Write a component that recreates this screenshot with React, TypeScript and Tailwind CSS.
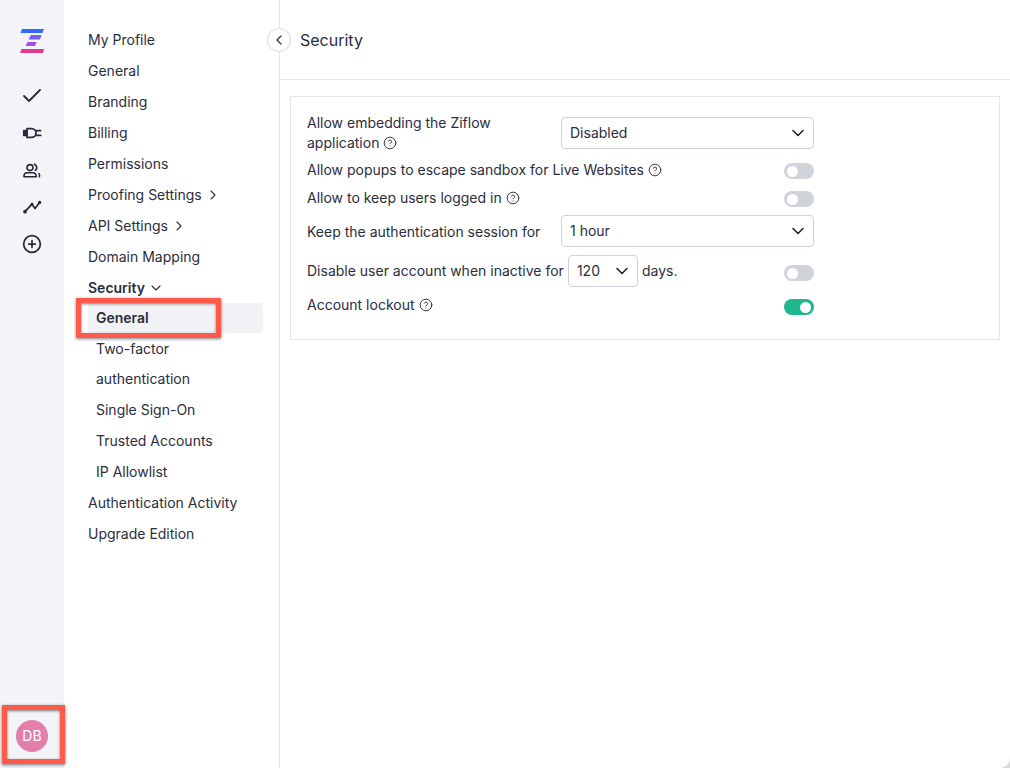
import { Check, ChevronDown, ChevronLeft, ChevronRight, CircleHelp, CirclePlus } from "lucide-react";

const navTop = [
  { label: "My Profile" },
  { label: "General" },
  { label: "Branding" },
  { label: "Billing" },
  { label: "Permissions" },
  { label: "Proofing Settings", more: true },
  { label: "API Settings", more: true },
  { label: "Domain Mapping" },
];

function Logo() {
  return (
    <svg width="24" height="24" viewBox="0 0 24 24">
      <polygon points="2,0 24,0 22.5,4 0.5,4" fill="#2f6bff" />
      <polygon points="11,6 21.5,6 20,10.5 8.5,10.5" fill="#7c5cf5" />
      <polygon points="7.5,13 16.5,13 15,17 5.5,17" fill="#a24fe0" />
      <polygon points="1.5,20 24,20 23,24 0,24" fill="#e6398d" />
    </svg>
  );
}

function PlugIcon() {
  return (
    <svg width="20" height="20" viewBox="0 0 20 20" fill="none" stroke="#27293a" strokeWidth="1.7" strokeLinecap="round" strokeLinejoin="round">
      <path d="M1.8 7.5H5v5H1.8z" fill="#27293a" />
      <path d="M5 5.6h4.6a4.4 4.4 0 0 1 0 8.8H5z" />
      <path d="M14.2 7.6h4.5M14.2 12.4h4.5" />
    </svg>
  );
}

function UsersIcon() {
  return (
    <svg width="20" height="20" viewBox="0 0 20 20" fill="none" stroke="#27293a" strokeWidth="1.6" strokeLinecap="round" strokeLinejoin="round">
      <circle cx="8" cy="7.6" r="3" />
      <path d="M2 16.8v-1a3 3 0 0 1 3-3h6a3.2 3.2 0 0 1 3.2 3.2v.8z" />
      <path d="M12.4 4.2a3.9 3.9 0 0 1 2.4 3.4 3.9 3.9 0 0 1-1.5 2.8M17 13.6a4 4 0 0 1 .4 3.2" />
    </svg>
  );
}

function TrendIcon() {
  return (
    <svg width="20" height="20" viewBox="0 0 20 20" fill="none" stroke="#27293a" strokeWidth="1.7" strokeLinecap="round" strokeLinejoin="round">
      <path d="M3 14.7 10 7.2l3 4.3 4.6-6" />
      <circle cx="3" cy="14.7" r="1" fill="#27293a" />
      <circle cx="10" cy="7.2" r="0.6" fill="#27293a" />
      <circle cx="17.6" cy="5.5" r="0.8" fill="#27293a" />
    </svg>
  );
}

function Help() {
  return <CircleHelp size={14} strokeWidth={1.6} className="ml-[4px] inline-block shrink-0 align-[-2px] text-[#2b2d3d]" />;
}

function Toggle({ on }: { on?: boolean }) {
  return (
    <div className={`flex h-4 w-[30px] items-center rounded-full px-[3px] ${on ? "justify-end bg-[#22b68d]" : "justify-start bg-[#d1d3da]"}`}>
      <div className="h-[11px] w-[11px] rounded-full bg-white" />
    </div>
  );
}

function Select({ value, className }: { value: string; className: string }) {
  return (
    <div className={`flex h-8 items-center justify-between rounded border border-[#d0d1dc] bg-white pl-2 pr-[5px] ${className}`}>
      <span>{value}</span>
      <ChevronDown size={20} strokeWidth={1.9} className="text-[#1f2130]" />
    </div>
  );
}

export default function App() {
  return (
    <div className="relative h-[768px] w-[1010px] overflow-hidden bg-[#d9d9d9] text-sm text-[#2b2d3d] [font-family:Inter,'Liberation_Sans',sans-serif]">
      <div className="flex h-full overflow-hidden rounded-br-[10px] bg-white">
        <aside className="flex w-16 shrink-0 flex-col items-center bg-[#f3f4f8]">
          <div className="mt-[29px]">
            <Logo />
          </div>
          <div className="mt-[33px] flex flex-col items-center gap-[17px]">
            <div className="flex h-5 w-5 items-center justify-center">
              <Check size={24} strokeWidth={1.8} className="shrink-0 text-[#27293a]" />
            </div>
            <PlugIcon />
            <UsersIcon />
            <TrendIcon />
            <CirclePlus size={20} strokeWidth={2.1} className="text-[#27293a]" />
          </div>
          <div className="mt-auto mb-4 flex h-8 w-8 items-center justify-center rounded-full bg-[#e27fab] text-sm text-white">DB</div>
        </aside>

        <nav className="w-[216px] shrink-0 border-r border-[#e6e7ee] pt-6 pl-6 pr-4">
          {navTop.map((item) => (
            <div key={item.label} className="flex h-[31px] items-center">
              {item.label}
              {item.more && <ChevronRight size={16} strokeWidth={1.6} className="ml-[3px]" />}
            </div>
          ))}
          <div className="flex h-[31px] items-center font-semibold">
            Security
            <ChevronDown size={16} strokeWidth={1.6} className="ml-[3px]" />
          </div>
          <div className="flex h-[30px] items-center rounded bg-[#f1f2f6] pl-2 font-semibold">General</div>
          <div className="mt-px pl-2">
            <div className="flex h-[30px] items-center">Two-factor</div>
            <div className="flex h-[30px] items-center">authentication</div>
            <div className="flex h-[31px] items-center">Single Sign-On</div>
            <div className="flex h-[31px] items-center">Trusted Accounts</div>
            <div className="flex h-[31px] items-center">IP Allowlist</div>
          </div>
          <div className="flex h-[31px] items-center">Authentication Activity</div>
          <div className="flex h-[31px] items-center">Upgrade Edition</div>
        </nav>

        <main className="relative flex-1">
          <div className="flex h-20 items-center border-b border-[#e6e7ee] pl-5 text-base">Security</div>
          <div className="mt-4 ml-[10px] mr-[10px] border border-[#e6e7ee] px-4 pt-4 pb-6">
            <div className="flex h-10 items-center">
              <div className="w-[254px] leading-5">
                Allow embedding the Ziflow
                <br />
                application
                <Help />
              </div>
              <Select value="Disabled" className="w-[253px]" />
            </div>
            <div className="mt-[7px] flex h-5 w-[507px] items-center justify-between">
              <span className="flex items-center">
                Allow popups to escape sandbox for Live Websites
                <Help />
              </span>
              <div className="mt-[2px]"><Toggle /></div>
            </div>
            <div className="mt-2 flex h-5 w-[507px] items-center justify-between">
              <span className="flex items-center">
                Allow to keep users logged in
                <Help />
              </span>
              <div className="mt-[2px]"><Toggle /></div>
            </div>
            <div className="mt-[7px] flex h-8 items-center">
              <div className="w-[254px] pt-[2px]">Keep the authentication session for</div>
              <Select value="1 hour" className="w-[253px]" />
            </div>
            <div className="mt-2 flex h-8 w-[507px] items-center justify-between">
              <span className="flex items-center">
                Disable user account when inactive for
                <Select value="120" className="mx-1 w-[70px]" />
                days.
              </span>
              <div className="mt-[4px]"><Toggle /></div>
            </div>
            <div className="mt-2 flex h-5 w-[507px] items-center justify-between">
              <span className="flex items-center">
                Account lockout
                <Help />
              </span>
              <div className="mt-1"><Toggle on /></div>
            </div>
          </div>
          <button className="absolute top-[28px] left-[-13px] flex h-6 w-6 items-center justify-center rounded-full border border-[#d8d9e3] bg-white">
            <ChevronLeft size={16} strokeWidth={1.8} />
          </button>
        </main>
      </div>

      <div className="absolute top-[298px] left-[76px] h-[40px] w-[145px] border-[5px] border-[#ff5a4a] shadow-[0_1px_3px_rgba(0,0,0,0.5),inset_0_1px_3px_rgba(0,0,0,0.5)]" />
      <div className="absolute top-[705px] left-[2px] h-[59px] w-[63px] border-[5px] border-[#ff5a4a] shadow-[0_1px_3px_rgba(0,0,0,0.5),inset_0_1px_3px_rgba(0,0,0,0.5)]" />
    </div>
  );
}
